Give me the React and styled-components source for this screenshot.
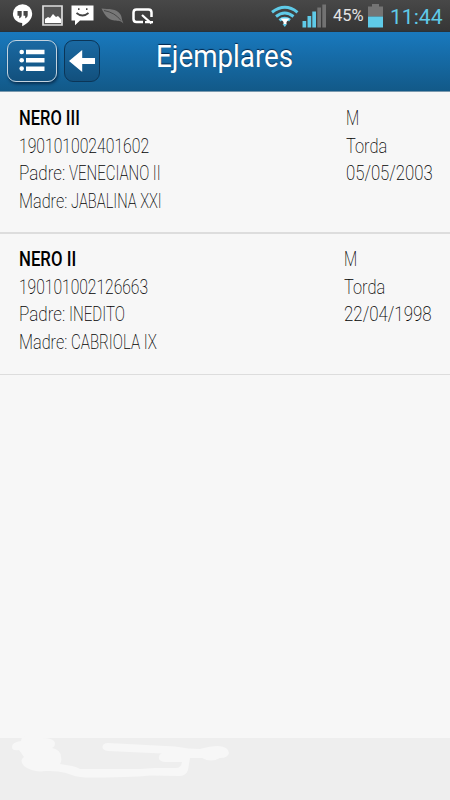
import React, { useLayoutEffect, useRef, useState } from "react";
import styled, { createGlobalStyle } from "styled-components";

const GlobalStyle = createGlobalStyle`
  * {
    box-sizing: border-box;
  }
  body {
    margin: 0;
    background: #f7f7f7;
    font-family: Roboto, "Liberation Sans", sans-serif;
  }
`;

const Page = styled.div`
  display: flex;
  flex-direction: column;
  width: 450px;
  height: 800px;
  overflow: hidden;
  background: #f7f7f7;
`;
const StatusBar = styled.div`
  display: flex;
  justify-content: space-between;
  height: 32px;
  flex: none;
  background: linear-gradient(#484848, #363636 94%, #24313b);
`;
const StatusIcons = styled.svg`
  display: block;
  flex: none;
`;
const StatusRight = styled.div`
  display: flex;
  width: 182px;
`;
const Battery = styled.div`
  width: 31px;
  padding: 7px 0 0 1px;
  color: #e4e4e4;
`;
const Clock = styled.div`
  padding: 4px 0 0 6px;
  color: #5fcbe8;
`;
const Header = styled.div`
  display: flex;
  align-items: flex-start;
  height: 60px;
  flex: none;
  padding: 8px 0 0 7px;
  gap: 7px;
  background: linear-gradient(#1979be, #125988);
  border-bottom: 1px solid #7a99ae;
`;
const HeaderButton = styled.div`
  display: flex;
  align-items: center;
  justify-content: center;
  width: ${(props) => (props.$active ? "50px" : "36px")};
  height: 42px;
  border: ${(props) => (props.$active ? "1.5px solid #c3d3df" : "1px solid #0b3557")};
  border-radius: 9px;
  background: linear-gradient(#1a69a2, #12507d);
  box-shadow: ${(props) => (props.$active ? "1px 2px 3px rgba(0, 20, 45, 0.6)" : "none")};
`;
const Title = styled.div`
  padding-left: 49px;
  margin-top: -2px;
  color: #fff;
  text-shadow: 0 -1px 1px #04284d;
`;
const List = styled.div`
  display: flex;
  flex-direction: column;
  flex: 1;
`;
const Row = styled.div`
  display: flex;
  justify-content: space-between;
  height: ${(props) => props.$height};
  padding: ${(props) => props.$top} 0 0 18.500px;
  border-bottom: ${(props) => props.$line} solid #dddddd;
`;
const Column = styled.div`
  display: flex;
  flex-direction: column;
  width: ${(props) => props.$width || "auto"};
`;
const Parent = styled.div`
  display: flex;
  gap: 4px;
`;
const FitText = styled.div`
  width: ${(props) => props.$width}px;
  height: ${(props) => props.$line}px;
  line-height: ${(props) => props.$line}px;
  font-size: ${(props) => props.$size}px;
  font-weight: ${(props) => props.$weight};
  white-space: nowrap;
`;
const FitInner = styled.span`
  display: inline-block;
  transform-origin: 0 50%;
`;
const Footer = styled.div`
  height: 62px;
  flex: none;
  background: #eeeeee;
`;
const Smudge = styled.svg`
  display: block;
  margin-top: -4px;
`;

// Condenses a line of text to the given width
const Fit = ({ width, size = 20, weight = 200, line = 27.5, children }) => {
  const ref = useRef(null);
  const [scale, setScale] = useState(1);
  useLayoutEffect(() => {
    setScale(width / ref.current.offsetWidth);
  }, [width, children]);
  return (
    <FitText $width={width} $size={size} $weight={weight} $line={line}>
      <FitInner ref={ref} style={{ transform: `scaleX(${scale})` }}>
        {children}
      </FitInner>
    </FitText>
  );
};

const horses = [
  {
    name: ["NERO III", 61],
    code: ["190101002401602", 130],
    father: ["VENECIANO II", 92],
    mother: ["JABALINA XXI", 91],
    info: [
      ["M", 13],
      ["Torda", 41],
      ["05/05/2003", 87],
    ],
    infoWidth: "104.5px",
    height: "142px",
    top: "13px",
    line: "2px",
  },
  {
    name: ["NERO II", 57],
    code: ["190101002126663", 129],
    father: ["INEDITO", 56],
    mother: ["CABRIOLA IX", 86],
    info: [
      ["M", 13],
      ["Torda", 41],
      ["22/04/1998", 88],
    ],
    infoWidth: "106.5px",
    height: "141px",
    top: "12px",
    line: "1px",
  },
];

const App = () => {
  return (
    <>
      <GlobalStyle />
      <Page>
        <StatusBar>
          <StatusIcons width="160" height="32" viewBox="0 0 160 32">
            <path
              d="M22.500 4.200a9.600 9.600 0 0 0-9.600 9.600c0 5.200 4.400 9 9.300 9.200v3.300c5-2.500 10-7 10-12.500a9.600 9.600 0 0 0-9.700-9.600z"
              fill="#fff"
            />
            <path
              d="M17.500 11h4.200v4.200q0 2.700-2.500 3.400v-2.900h-1.700zM23.500 11h4.200v4.200q0 2.700-2.500 3.400v-2.900h-1.700z"
              fill="#454545"
            />
            <path d="M43 6h19v19H43z" fill="#555" stroke="#ddd" strokeWidth="1.700" />
            <path d="M45 23v-4l3-2 2 1 3-4 3 3 2-1 3 3v4z" fill="#fff" />
            <path d="M71.500 5.500h22v15H80l-5 4.700v-4.700h-3.500z" fill="#fff" />
            <path
              d="M76.500 13q6 5 12 0M78 9.200h1.500M86 9.200h1.500"
              fill="none"
              stroke="#444"
              strokeWidth="1.800"
            />
            <path
              d="M101.500 8.500c7 1 15-.5 19 6 1.600 3 1 5 3 9-3-3-5-2.500-9-3-7-.8-10-6-13-12z"
              fill="#777"
            />
            <path d="M104 10.500q11 2 17 10" fill="none" stroke="#484848" strokeWidth="1" />
            <path
              d="M143 22h-6.500q-3 0-3-3v-6.500q0-3 3-3h12q3 0 3 3V17"
              fill="none"
              stroke="#fff"
              strokeWidth="2.500"
            />
            <path d="M142 15l9.500 8.500M145 22.200h8" stroke="#fff" strokeWidth="2.300" />
          </StatusIcons>
          <StatusRight>
            <StatusIcons width="64" height="32" viewBox="268 0 64 32">
              <g fill="none" stroke="#5fcbe8" strokeWidth="3">
                <path d="M272 12.300q13-10 25.500 0" />
                <path d="M276 16.500q8.800-7 17.500 0" />
                <path d="M279.500 20.300q5-4 10.500 0" />
              </g>
              <path d="M280.500 18.500h9l-3 3.500v2h-3v-2z" fill="#fff" />
              <path d="M282.500 24h4.500l-2.200 3z" fill="#5fcbe8" />
              <path
                d="M302.500 21h3.700v6.500h-3.700zM307.500 16h3.700v11.500h-3.700zM312.300 11.500h3.700v16h-3.700z"
                fill="#5fcbe8"
              />
              <path d="M317.300 7.500h3.700v20h-3.700zM322.300 4.500h3.700v23h-3.700z" fill="#727272" />
            </StatusIcons>
            <Battery>
              <Fit width={31} size={16.500} weight={400} line={18}>
                45%
              </Fit>
            </Battery>
            <StatusIcons width="21" height="32" viewBox="363 0 21 32">
              <path d="M372 4h7v2.500h4v10h-15v-10h4z" fill="#747474" />
              <path d="M368 16.500h15v11h-15z" fill="#5fcbe8" />
            </StatusIcons>
            <Clock>
              <Fit width={52.500} size={20.500} weight={400} line={26}>
                11:44
              </Fit>
            </Clock>
          </StatusRight>
        </StatusBar>
        <Header>
          <HeaderButton $active>
            <svg width="26" height="24" viewBox="0 0 26 24" fill="#fff">
              <circle cx="2.700" cy="3" r="2.300" />
              <circle cx="2.700" cy="11.300" r="2.300" />
              <circle cx="2.700" cy="19.600" r="2.300" />
              <path d="M7 .8h18.500v4.500H7zM7 9.100h18.500v4.500H7zM7 17.400h18.500v4.500H7z" />
            </svg>
          </HeaderButton>
          <HeaderButton>
            <svg width="26" height="22" viewBox="0 0 26 22" fill="#fff">
              <path d="M0 11L13.200 0v8H26v6H13.200v8z" />
            </svg>
          </HeaderButton>
          <Title>
            <Fit width={137} size={31} weight={400} line={37}>
              Ejemplares
            </Fit>
          </Title>
        </Header>
        <List>
          {horses.map((horse) => (
            <Row
              key={horse.code[0]}
              $height={horse.height}
              $top={horse.top}
              $line={horse.line}
            >
              <Column>
                <Fit width={horse.name[1]} weight={500}>
                  {horse.name[0]}
                </Fit>
                <Fit width={horse.code[1]}>{horse.code[0]}</Fit>
                <Parent>
                  <Fit width={46}>Padre:</Fit>
                  <Fit width={horse.father[1]}>{horse.father[0]}</Fit>
                </Parent>
                <Parent>
                  <Fit width={48}>Madre:</Fit>
                  <Fit width={horse.mother[1]}>{horse.mother[0]}</Fit>
                </Parent>
              </Column>
              <Column $width={horse.infoWidth}>
                {horse.info.map(([text, width]) => (
                  <Fit key={text} width={width}>
                    {text}
                  </Fit>
                ))}
              </Column>
            </Row>
          ))}
        </List>
        <Footer>
          <Smudge width="250" height="62" viewBox="0 734 250 62">
            <path
              d="M12 747Q12 742 21 741Q21 736 28 736L42 738Q54 738 55 743Q55 747 52 748Q61 750 61 757Q62 761 60 764L72 766Q77 767 80 769L140 769L155 768L176 768Q181 768 182 762L165 762Q158 761 159 757Q159 754 162 753.500L108 751Q102 750 102.500 746.500Q103 743 108 743L175 746.500Q189 749 200 749Q210 746 218 746Q229 747 229 753Q228 758 220 758Q211 763 202 758L190 758L188 770Q186 776 179 776L150 775.500Q130 777.500 85 777.500Q76 777 66 773Q57 770.500 46 771Q33 773 24 766Q19 760 24 757L19 750Q12 751 12 747Z"
              fill="#f7f7f7"
            />
          </Smudge>
        </Footer>
      </Page>
    </>
  );
};

export default App;
